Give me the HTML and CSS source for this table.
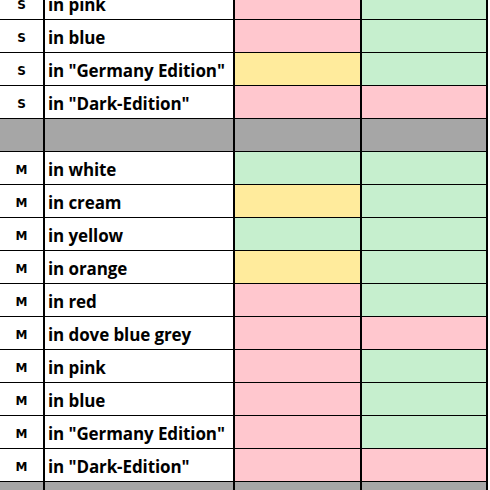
FILE: index.html
```html
<!DOCTYPE html>
<html>
<head>
<meta charset="utf-8">
<link rel="stylesheet" href="styles.css">
</head>
<body>
<div class="sheet">
  <div class="row"><div class="c size">S</div><div class="c name">in pink</div><div class="c bad"></div><div class="c good"></div></div>
  <div class="row"><div class="c size">S</div><div class="c name">in blue</div><div class="c bad"></div><div class="c good"></div></div>
  <div class="row"><div class="c size">S</div><div class="c name">in "Germany Edition"</div><div class="c neutral"></div><div class="c good"></div></div>
  <div class="row"><div class="c size">S</div><div class="c name">in "Dark-Edition"</div><div class="c bad"></div><div class="c bad"></div></div>
  <div class="row sep"><div class="c"></div><div class="c"></div><div class="c"></div><div class="c"></div></div>
  <div class="row"><div class="c size">M</div><div class="c name">in white</div><div class="c good"></div><div class="c good"></div></div>
  <div class="row"><div class="c size">M</div><div class="c name">in cream</div><div class="c neutral"></div><div class="c good"></div></div>
  <div class="row"><div class="c size">M</div><div class="c name">in yellow</div><div class="c good"></div><div class="c good"></div></div>
  <div class="row"><div class="c size">M</div><div class="c name">in orange</div><div class="c neutral"></div><div class="c good"></div></div>
  <div class="row"><div class="c size">M</div><div class="c name">in red</div><div class="c bad"></div><div class="c good"></div></div>
  <div class="row"><div class="c size">M</div><div class="c name">in dove blue grey</div><div class="c bad"></div><div class="c bad"></div></div>
  <div class="row"><div class="c size">M</div><div class="c name">in pink</div><div class="c bad"></div><div class="c good"></div></div>
  <div class="row"><div class="c size">M</div><div class="c name">in blue</div><div class="c bad"></div><div class="c good"></div></div>
  <div class="row"><div class="c size">M</div><div class="c name">in "Germany Edition"</div><div class="c bad"></div><div class="c good"></div></div>
  <div class="row"><div class="c size">M</div><div class="c name">in "Dark-Edition"</div><div class="c bad"></div><div class="c bad"></div></div>
  <div class="row sep"><div class="c"></div><div class="c"></div><div class="c"></div><div class="c"></div></div>
</div>
</body>
</html>
```

FILE: styles.css
```css
html, body {
  margin: 0;
  padding: 0;
  background: #ffffff;
  overflow: hidden;
  height: 490px;
}
.sheet {
  margin-top: -13px;
  width: 488px;
  display: flex;
  flex-direction: column;
  font-family: "Open Sans", "Liberation Sans", sans-serif;
  color: #000;
}
.row {
  display: grid;
  grid-template-columns: 45px 190px 127px 126px;
  height: 33px;
}
.c {
  box-sizing: border-box;
  border-right: 2px solid #000;
  border-bottom: 1px solid #000;
  display: flex;
  align-items: center;
  background: #ffffff;
}
.size {
  justify-content: center;
  font-family: "DejaVu Sans", "Liberation Sans", sans-serif;
  font-weight: 700;
  font-size: 12px;
  padding-top: 3px;
}
.name {
  padding-left: 3px;
  font-weight: 700;
  font-size: 17px;
  letter-spacing: -0.1px;
  padding-top: 2px;
}
.bad { background: #ffc7ce; }
.good { background: #c6efce; }
.neutral { background: #ffeb9c; }
.sep .c { background: #a6a6a6; }
```
